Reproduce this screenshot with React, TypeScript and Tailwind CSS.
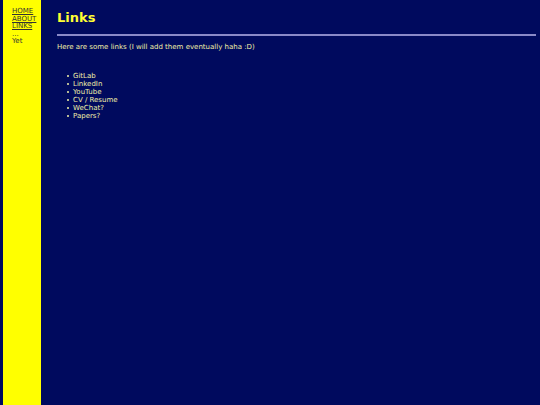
const items = ["GitLab", "LinkedIn", "YouTube", "CV / Resume", "WeChat?", "Papers?"];

export default function App() {
  return (
    <div
      className="flex h-[405px] w-[540px] bg-[#000a5e] pl-[3px] overflow-hidden"
      style={{ fontFamily: '"DejaVu Sans", Verdana, sans-serif' }}
    >
      <div className="w-[38px] shrink-0 bg-[#ffff00] pl-[9px] pt-[8px] text-[7px] leading-[7.6px] text-[#333333]">
        <div><a className="underline" href="#">HOME</a></div>
        <div><a className="underline" href="#">ABOUT</a></div>
        <div><a className="underline" href="#">LINKS</a></div>
        <div>...</div>
        <div>Yet</div>
      </div>
      <div className="flex-1 pl-[16px] pr-[4px] pt-[10px] text-[#f0f0a8]">
        <h1 className="text-[13px] font-bold leading-[16px] text-[#ffff33]">Links</h1>
        <div className="mt-[8px] h-[2px] bg-[#8a8ac8]" />
        <p className="mt-[7px] text-[7px] leading-[8px]">
          Here are some links (I will add them eventually haha :D)
        </p>
        <ul className="mt-[21px] pl-[10px] text-[7px] leading-[8px]">
          {items.map((t) => (
            <li key={t} className="flex items-center">
              <span className="mr-[4px] h-[2px] w-[2px] rounded-full bg-[#f0f0a8]" />
              <span>{t}</span>
            </li>
          ))}
        </ul>
      </div>
    </div>
  );
}
